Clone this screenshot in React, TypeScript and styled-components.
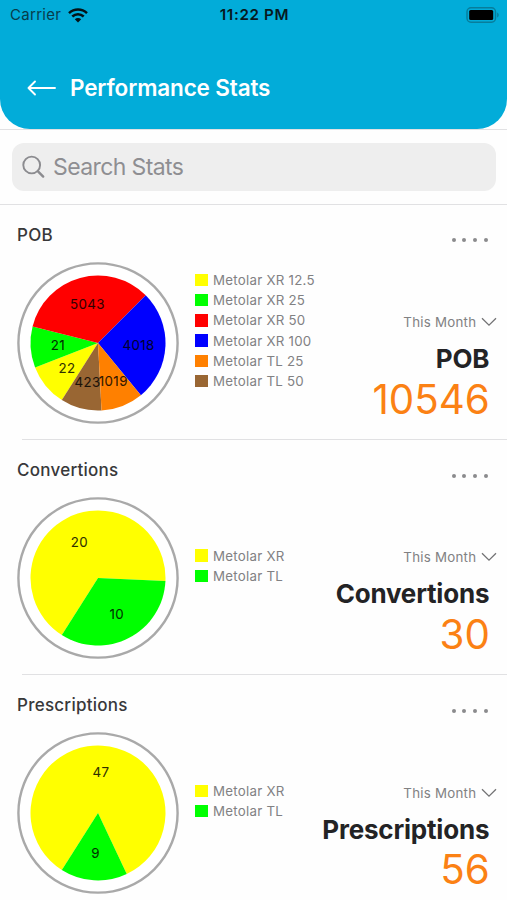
import React from "react";
import styled, { createGlobalStyle } from "styled-components";

const GlobalStyle = createGlobalStyle`
  * { box-sizing: border-box; }
  body {
    margin: 0;
    background: #fefefe;
    font-family: Inter, "Liberation Sans", sans-serif;
    overflow: hidden;
  }
`;

const Screen = styled.main`
  display: flex;
  flex-direction: column;
  width: 507px;
  height: 900px;
  overflow: hidden;
`;

const HeaderArea = styled.div`
  height: 129.5px;
  flex: none;
  border-bottom: 1.5px solid #e1e1e3;
`;

const Header = styled.header`
  height: 128.5px;
  border-radius: 0 0 30px 30px;
  background: #02acd9;
`;

const StatusBar = styled.div`
  display: grid;
  grid-template-columns: 1fr auto 1fr;
  align-items: center;
  height: 30px;
  padding: 0 8px 0 10px;
  color: #07191e;
`;

const Carrier = styled.div`
  display: flex;
  align-items: center;
  gap: 7px;
  font-size: 15px;
  line-height: 30px;
  letter-spacing: 0.3px;
  color: #073c4b;
`;

const Clock = styled.div`
  font-size: 15.2px;
  line-height: 30px;
  font-weight: 600;
  letter-spacing: 0.65px;
`;

const BatteryIcon = styled.svg`
  justify-self: end;
`;

const NavBar = styled.div`
  display: flex;
  align-items: center;
  height: 60px;
  margin-top: -1px;
  padding: 0 27px;
  gap: 13px;
  transform: translateY(29px);
`;

const Title = styled.h1`
  margin: 0;
  color: #fff;
  font-size: 22.5px;
  line-height: 30px;
  font-weight: 600;
  letter-spacing: -0.15px;
`;

const SearchArea = styled.div`
  flex: none;
  height: 75px;
  padding: 13px 11px 0 12px;
  border-bottom: 1.5px solid #e1e1e3;
`;

const SearchField = styled.div`
  display: flex;
  align-items: center;
  gap: 8px;
  height: 48px;
  padding-left: 10px;
  border-radius: 12px;
  background: #eeeeee;
  color: #8e8e92;
  font-size: 23px;
  letter-spacing: -0.6px;
`;

const Card = styled.section`
  flex: none;
  display: flex;
  flex-direction: column;
  height: 235.25px;
`;

const CardHeader = styled.div`
  display: flex;
  justify-content: space-between;
  height: 57px;
  padding: 18.2px 19px 0 17px;
`;

const CardTitle = styled.h2`
  margin: 0;
  font-size: 17px;
  line-height: 24px;
  font-weight: 500;
  letter-spacing: 0.25px;
  color: #38383a;
`;

const MoreDots = styled.div`
  display: flex;
  gap: 6.8px;
  padding-top: 15.6px;
`;

const Dot = styled.i`
  width: 4px;
  height: 4px;
  border-radius: 50%;
  background: #8b8b8d;
`;

const CardBody = styled.div`
  display: grid;
  grid-template-columns: 178px 122px minmax(0, 1fr);
  height: 177px;
  padding-left: 17px;
`;

const Legend = styled.ul`
  list-style: none;
  margin: 0;
  padding: 0;
  align-self: start;
  height: 138px;
  display: flex;
  flex-direction: column;
  justify-content: center;
`;

const LegendItem = styled.li`
  display: flex;
  align-items: center;
  gap: 5.5px;
  height: 20.2px;
  color: #818183;
  font-size: 13.3px;
  letter-spacing: 0.25px;
  white-space: nowrap;
`;

const Swatch = styled.span<{ $color: string }>`
  flex: none;
  width: 12.5px;
  height: 12.5px;
  background: ${(p) => p.$color};
`;

const Summary = styled.div`
  display: flex;
  flex-direction: column;
  align-items: flex-end;
  padding: 50.6px 17.7px 0 0;
`;

const Period = styled.div`
  display: flex;
  align-items: center;
  gap: 5px;
  height: 20px;
  margin-right: -8px;
  color: #818183;
  font-size: 13.3px;
  letter-spacing: 0.25px;
  white-space: nowrap;
`;

const Metric = styled.div`
  margin-top: 10px;
  font-size: 26px;
  line-height: 34px;
  font-weight: 700;
  letter-spacing: -0.2px;
  color: #232325;
`;

const Total = styled.div`
  margin-top: -0.6px;
  margin-right: -0.5px;
  font-size: 40.3px;
  line-height: 48px;
  font-weight: 400;
  letter-spacing: 0;
  color: #fb8114;
`;

const Divider = styled.div`
  height: 1.25px;
  margin-left: 22px;
  background: #e1e1e3;
`;

const SliceLabel = styled.text`
  font-size: 13.3px;
  letter-spacing: 0.4px;
  text-anchor: middle;
  fill: #000;
  fill-opacity: 0.82;
  stroke: #000;
  stroke-opacity: 0.5;
  stroke-width: 0.2px;
`;

type Slice = { value: number; color: string; from: number; to: number; x: number; y: number };
type Stat = { name: string; total: number; legend: [string, string][]; slices: Slice[] };

const YELLOW = "#ffff00";
const GREEN = "#00ff00";
const RED = "#ff0000";
const BLUE = "#0000ff";
const ORANGE = "#ff8000";
const BROWN = "#996633";

const stats: Stat[] = [
  {
    name: "POB",
    total: 10546,
    legend: [
      ["Metolar XR 12.5", YELLOW],
      ["Metolar XR 25", GREEN],
      ["Metolar XR 50", RED],
      ["Metolar XR 100", BLUE],
      ["Metolar TL 25", ORANGE],
      ["Metolar TL 50", BROWN],
    ],
    slices: [
      { value: 22, color: YELLOW, from: 122.4, to: 158.8, x: 50, y: 111.3 },
      { value: 21, color: GREEN, from: 158.8, to: 194.2, x: 41, y: 88.3 },
      { value: 5043, color: RED, from: 194.2, to: 315, x: 70.5, y: 46.8 },
      { value: 4018, color: BLUE, from: -45, to: 50.6, x: 121.5, y: 88.3 },
      { value: 423, color: BROWN, from: 87, to: 122.4, x: 70.5, y: 125 },
      { value: 1019, color: ORANGE, from: 50.6, to: 87, x: 96.3, y: 123.6 },
    ],
  },
  {
    name: "Convertions",
    total: 30,
    legend: [["Metolar XR", YELLOW], ["Metolar TL", GREEN]],
    slices: [
      { value: 20, color: YELLOW, from: 122.4, to: 362.6, x: 62.5, y: 50 },
      { value: 10, color: GREEN, from: 2.6, to: 122.4, x: 99.7, y: 121.5 },
    ],
  },
  {
    name: "Prescriptions",
    total: 56,
    legend: [["Metolar XR", YELLOW], ["Metolar TL", GREEN]],
    slices: [
      { value: 47, color: YELLOW, from: 122.4, to: 424.8, x: 84, y: 45.3 },
      { value: 9, color: GREEN, from: 64.8, to: 122.4, x: 78.5, y: 126.2 },
    ],
  },
];

const CENTER = 81;
const RADIUS = 67.5;

function slicePath({ from, to }: Slice) {
  const point = (deg: number) => {
    const a = (deg * Math.PI) / 180;
    return `${CENTER + RADIUS * Math.cos(a)} ${CENTER + RADIUS * Math.sin(a)}`;
  };
  return `M${CENTER} ${CENTER}L${point(from)}A${RADIUS} ${RADIUS} 0 ${to - from > 180 ? 1 : 0} 1 ${point(to)}Z`;
}

function Pie({ slices }: { slices: Slice[] }) {
  return (
    <svg width="162" height="162" viewBox="0 0 162 162">
      <circle cx={CENTER} cy={CENTER} r="79.6" fill="#fff" stroke="#a9a9a9" strokeWidth="2.4" />
      {slices.map((s) => <path key={s.value} d={slicePath(s)} fill={s.color} />)}
      {slices.map((s) => <SliceLabel key={s.value} x={s.x} y={s.y}>{s.value}</SliceLabel>)}
    </svg>
  );
}

function StatCard({ stat }: { stat: Stat }) {
  return (
    <Card>
      <CardHeader>
        <CardTitle>{stat.name}</CardTitle>
        <MoreDots><Dot /><Dot /><Dot /><Dot /></MoreDots>
      </CardHeader>
      <CardBody>
        <Pie slices={stat.slices} />
        <Legend>
          {stat.legend.map(([label, color]) => (
            <LegendItem key={label}><Swatch $color={color} />{label}</LegendItem>
          ))}
        </Legend>
        <Summary>
          <Period>
            This Month
            <svg width="16" height="10" viewBox="0 0 16 10" fill="none" stroke="#737375" strokeWidth="1.3">
              <path d="M1 1.2L8 8.2L15 1.2" />
            </svg>
          </Period>
          <Metric>{stat.name}</Metric>
          <Total>{stat.total}</Total>
        </Summary>
      </CardBody>
      <Divider />
    </Card>
  );
}

export default function App() {
  return (
    <>
      <GlobalStyle />
      <Screen>
        <HeaderArea>
          <Header>
            <StatusBar>
              <Carrier>
                Carrier
                <svg width="20" height="15" viewBox="0 0 20 15" fill="none" stroke="#041216" strokeWidth="2.5">
                  <path d="M1 5.1C6.1.2 13.9.2 19 5.1" />
                  <path d="M4.3 8.5c3.3-3.1 8.1-3.1 11.4 0" />
                  <path d="M10 14.4L6.8 11.2c1.8-1.7 4.6-1.7 6.4 0Z" fill="#041216" stroke="none" />
                </svg>
              </Carrier>
              <Clock>11:22 PM</Clock>
              <BatteryIcon width="33" height="16" viewBox="0 0 33 16">
                <rect x="1" y=".7" width="28.5" height="14.6" rx="4" fill="none" stroke="#087d9b" strokeWidth="1.4" />
                <rect x="3.2" y="3" width="24" height="10" rx="1.5" fill="#000" />
                <path d="M31.2 5.5c2 1 2 4 0 5Z" fill="#087d9b" />
              </BatteryIcon>
            </StatusBar>
            <NavBar>
              <svg width="30" height="16" viewBox="0 0 30 16" fill="none" stroke="#fff" strokeWidth="1.9" strokeLinecap="round" strokeLinejoin="round">
                <path d="M28 8H1.5M8 1.5L1.5 8L8 14.5" />
              </svg>
              <Title>Performance Stats</Title>
            </NavBar>
          </Header>
        </HeaderArea>
        <SearchArea>
          <SearchField>
            <svg width="23" height="24" viewBox="0 0 23 24" fill="none" stroke="#8b8b8f" strokeLinecap="round">
              <circle cx="9.7" cy="10" r="8.4" strokeWidth="1.9" />
              <path d="M16 16.3L21.2 21.6" strokeWidth="2.4" />
            </svg>
            Search Stats
          </SearchField>
        </SearchArea>
        {stats.map((s) => <StatCard key={s.name} stat={s} />)}
      </Screen>
    </>
  );
}
